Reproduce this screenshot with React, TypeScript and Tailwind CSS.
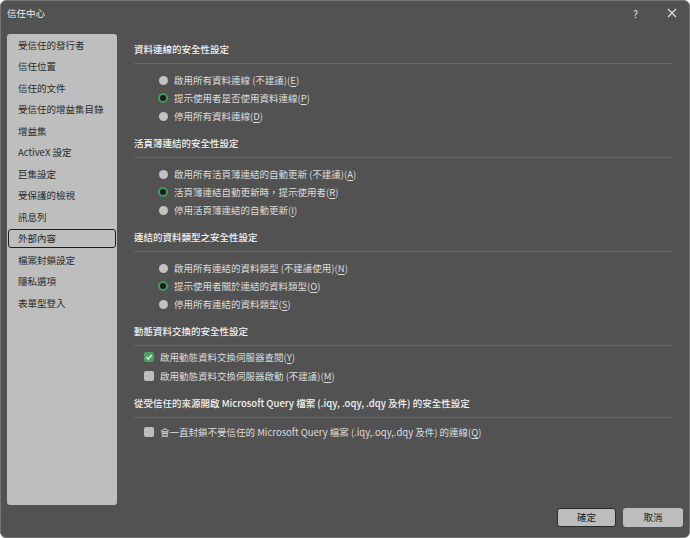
import React from "react";

const FONT = { fontFamily: '"Noto Sans CJK TC", "Noto Sans", sans-serif' };

const sideItems = [
  "受信任的發行者",
  "信任位置",
  "信任的文件",
  "受信任的增益集目錄",
  "增益集",
  "ActiveX 設定",
  "巨集設定",
  "受保護的檢視",
  "訊息列",
  "外部內容",
  "檔案封鎖設定",
  "隱私選項",
  "表單型登入",
];

type Opt = { text: string; key: string; checked?: boolean };

function Label({ o }: { o: Opt }) {
  return (
    <span className="text-[9.5px] text-[#dcdcdc] whitespace-nowrap">
      {o.text}(<span className="underline underline-offset-[1.5px]">{o.key}</span>)
    </span>
  );
}

function Radio({ o }: { o: Opt }) {
  return (
    <div className="h-[18px] flex items-center pl-[24px] gap-[6px]">
      {o.checked ? (
        <span className="w-[10px] h-[10px] rounded-full bg-[#3f9b62] flex items-center justify-center">
          <span className="w-[6px] h-[6px] rounded-full bg-[#1c1c1c]" />
        </span>
      ) : (
        <span className="w-[9px] h-[9px] mx-[0.5px] rounded-full bg-[#c2c2c2]" />
      )}
      <Label o={o} />
    </div>
  );
}

function Check({ o }: { o: Opt }) {
  return (
    <div className="h-[18.5px] flex items-center pl-[10px] gap-[6px]">
      {o.checked ? (
        <span className="w-[10px] h-[10px] rounded-[2px] bg-[#4a9f66] flex items-center justify-center">
          <svg width="8" height="8" viewBox="0 0 8 8">
            <path d="M1.3 4.2 L3.2 6 L6.8 2" fill="none" stroke="#ffffff" strokeWidth="1.3" />
          </svg>
        </span>
      ) : (
        <span className="w-[10px] h-[10px] rounded-[2px] bg-[#bdbdbd]" />
      )}
      <Label o={o} />
    </div>
  );
}

function Section({
  title,
  opts,
  check,
  pt,
}: {
  title: string;
  opts: Opt[];
  check?: boolean;
  pt: string;
}) {
  return (
    <div className="flex flex-col">
      <div className="h-[18px] flex items-center text-[9.5px] font-medium text-[#f2f2f2] whitespace-nowrap">
        {title}
      </div>
      <div className="mt-[5px] h-[1px] bg-[#666666] mr-[17px]" />
      <div className={`flex flex-col ${pt}`}>
        {opts.map((o, i) =>
          check ? <Check key={i} o={o} /> : <Radio key={i} o={o} />
        )}
      </div>
    </div>
  );
}

export default function App() {
  return (
    <div
      style={FONT}
      className="w-[690px] h-[538px] bg-[#525252] border border-[#757575] rounded-[6px] flex flex-col overflow-hidden"
    >
      <div className="h-[24px] flex items-center pl-[6px] pr-[12px]">
        <span className="text-[9.5px] text-[#eeeeee]">信任中心</span>
        <span className="ml-auto text-[10px] text-[#e6e6e6] mr-[29px]">?</span>
        <svg width="10" height="10" viewBox="0 0 10 10">
          <path d="M1 1 L9 9 M9 1 L1 9" stroke="#e2e2e2" strokeWidth="1.1" />
        </svg>
      </div>
      <div className="flex flex-row mt-[9px] h-[471px]">
        <div className="ml-[6px] w-[110px] h-full bg-[#bebebe] rounded-[3px] flex flex-col">
          {sideItems.map((s, i) =>
            s === "外部內容" ? (
              <div key={i} className="h-[21.5px] flex items-center py-[1px]">
                <div className="w-full h-[19px] mx-[1px] border-[1.5px] border-[#1e1e1e] rounded-[3px] flex items-center pl-[9px] text-[9.5px] text-[#2a2a2a] whitespace-nowrap">
                  {s}
                </div>
              </div>
            ) : (
              <div
                key={i}
                className="h-[21.5px] flex items-center pl-[11px] text-[9.5px] text-[#2a2a2a] whitespace-nowrap"
              >
                {s}
              </div>
            )
          )}
        </div>
        <div className="flex-1 ml-[17px] pt-[6px] flex flex-col gap-[9px]">
          <Section
            title="資料連線的安全性設定"
            pt="pt-[7px]"
            opts={[
              { text: "啟用所有資料連線 (不建議)", key: "E" },
              { text: "提示使用者是否使用資料連線", key: "P", checked: true },
              { text: "停用所有資料連線", key: "D" },
            ]}
          />
          <Section
            title="活頁簿連結的安全性設定"
            pt="pt-[7px]"
            opts={[
              { text: "啟用所有活頁簿連結的自動更新 (不建議)", key: "A" },
              { text: "活頁簿連結自動更新時，提示使用者", key: "R", checked: true },
              { text: "停用活頁簿連結的自動更新", key: "I" },
            ]}
          />
          <Section
            title="連結的資料類型之安全性設定"
            pt="pt-[7px]"
            opts={[
              { text: "啟用所有連結的資料類型 (不建議使用)", key: "N" },
              { text: "提示使用者關於連結的資料類型", key: "O", checked: true },
              { text: "停用所有連結的資料類型", key: "S" },
            ]}
          />
          <Section
            title="動態資料交換的安全性設定"
            check
            pt="pt-[2px]"
            opts={[
              { text: "啟用動態資料交換伺服器查閱", key: "Y", checked: true },
              { text: "啟用動態資料交換伺服器啟動 (不建議)", key: "M" },
            ]}
          />
          <Section
            title="從受信任的來源開啟 Microsoft Query 檔案 (.iqy, .oqy, .dqy 及件) 的安全性設定"
            check
            pt="pt-[5px]"
            opts={[
              {
                text: "會一直封鎖不受信任的 Microsoft Query 檔案 (.iqy,.oqy,.dqy 及件) 的連線",
                key: "Q",
              },
            ]}
          />
        </div>
      </div>
      <div className="flex flex-row justify-end gap-[7px] mt-[3px] pr-[6px]">
        <button className="w-[59px] h-[19px] bg-[#bdbdbd] rounded-[3px] border-[1.5px] border-[#2a2a2a] text-[9.5px] text-[#222222] flex items-center justify-center">
          確定
        </button>
        <button className="w-[60px] h-[19px] bg-[#bdbdbd] rounded-[3px] text-[9.5px] text-[#222222] flex items-center justify-center">
          取消
        </button>
      </div>
    </div>
  );
}
